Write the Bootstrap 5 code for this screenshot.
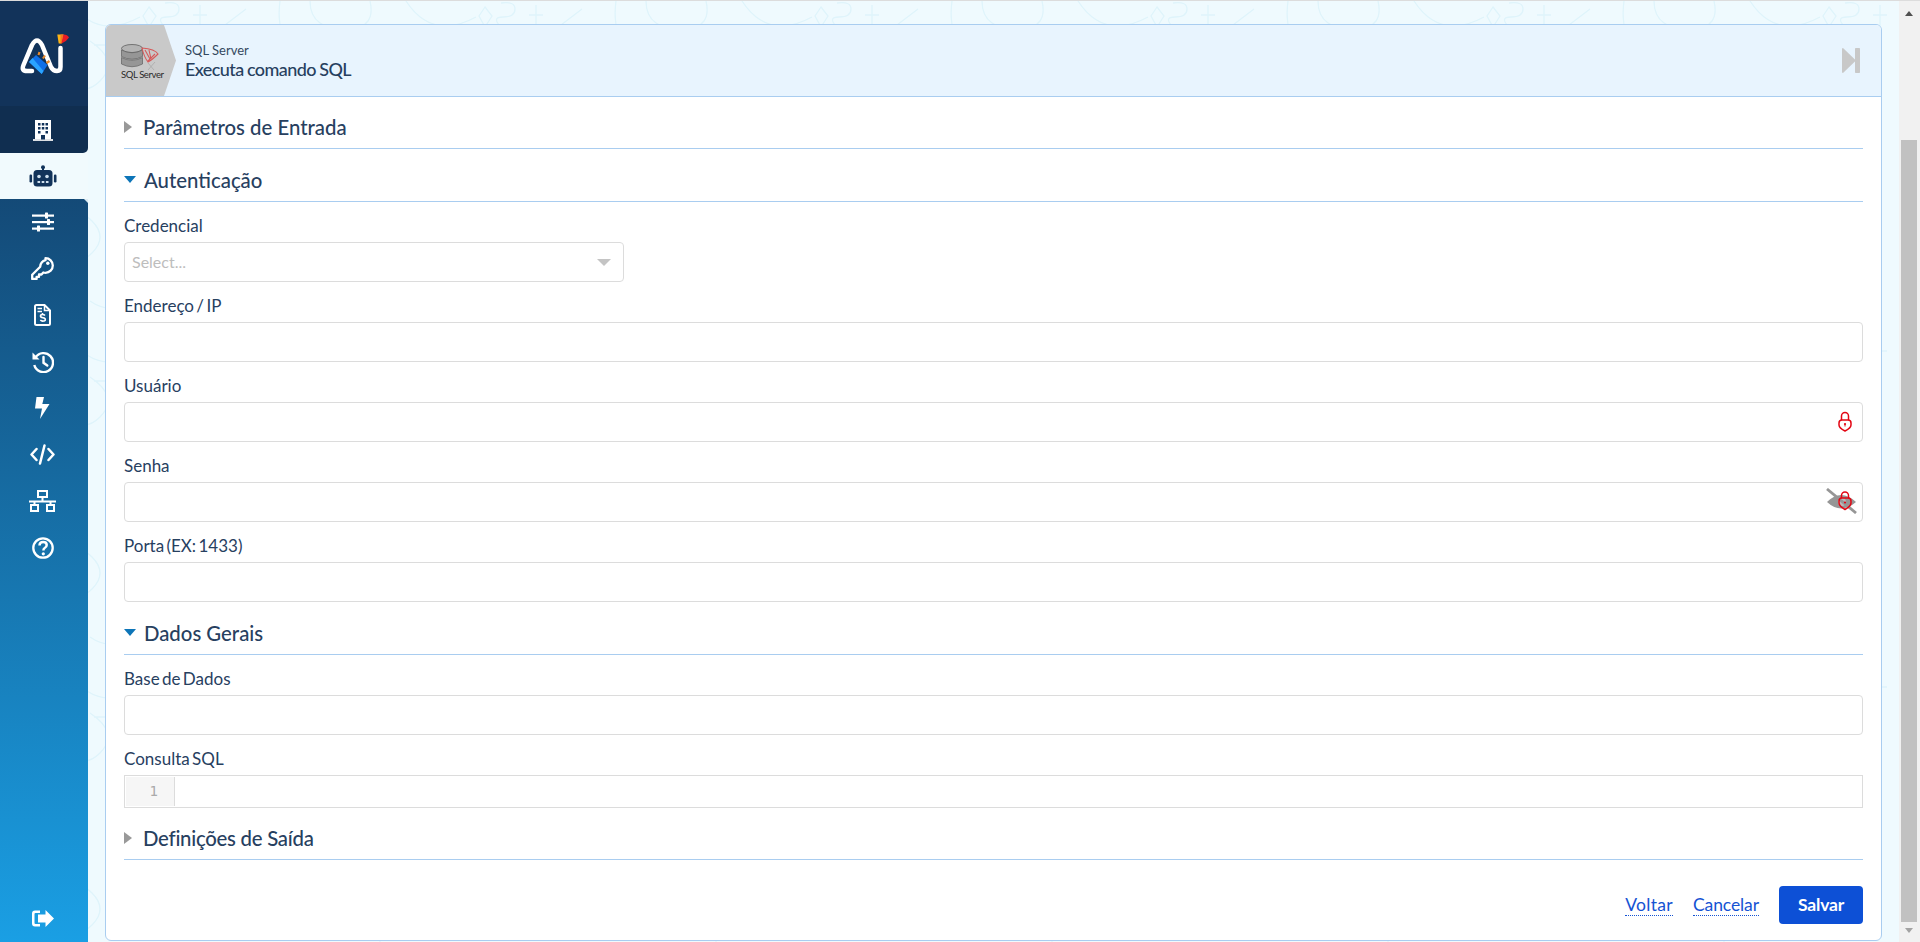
<!DOCTYPE html>
<html lang="pt-BR">
<head>
<meta charset="utf-8">
<title>SQL Server</title>
<link href="https://cdn.jsdelivr.net/npm/bootstrap@5.3.0/dist/css/bootstrap.min.css" rel="stylesheet">
<style>
html,body{height:942px;overflow:hidden;}
body{font-family:Lato,"Liberation Sans",sans-serif;color:#27405f;background:#effafe;}
.app-shell{height:942px;border-top:1px solid #dcdcdc;position:relative;}
.bg-doodle{position:absolute;left:0;top:0;width:1920px;height:942px;pointer-events:none;}
.side-rail{width:88px;flex:0 0 88px;background:linear-gradient(180deg,#12335a 0%,#1a9fe4 100%);position:relative;z-index:1;}
.logo-cell{height:105px;background:#12335a;}
.logo-art{display:block;}
.rail-item{height:46.5px;color:#fff;padding-right:3px;}
.active-wrap{background:#f1fafd;}
.rail-active{height:47px;background:#102e50;border-radius:0 0 5px 0;padding-right:3px;}
.rail-robot{height:46px;background:#f1fafd;color:#12335a;padding-right:3px;position:relative;}
.rail-robot::after{content:"";position:absolute;right:0;top:100%;border-top:4px solid #dcebf3;border-left:4px solid transparent;}
.panel-wrap{flex:1 1 auto;padding:23px 17px 0;min-width:0;position:relative;z-index:1;}
.form-panel{height:917px;border:1px solid #a9cdf0;border-radius:6px;background:#fff;overflow:hidden;}
.panel-top{height:72px;background:#e8f4fe;border-bottom:1px solid #a9cdf0;}
.brand-tag{width:70px;height:71px;background:#c9c9c9;clip-path:polygon(0 0,58px 0,70px 50%,58px 100%,0 100%);padding-left:14px;}
.head-text{margin-left:9px;}
.sub-title{font-size:13px;line-height:16px;color:#34495f;}
.main-title{font-size:18px;line-height:22px;color:#27405f;font-weight:500;letter-spacing:-.6px;word-spacing:-.5px;}
.skip-icon{margin-right:20px;margin-left:auto;}
.panel-body{padding:0 18px;}
.sec-head{height:53px;border-bottom:1px solid #a9cdf0;gap:8px;padding-top:9px;}
.sec-closed{gap:11px;}
.sec-first{height:52px;}
.sec-title{font-size:20.35px;font-weight:500;color:#27405f;line-height:24px;}
.sec-last{height:52px;}
.sec-last .sec-title{letter-spacing:-.25px;}
.tri-right{width:0;height:0;border-left:8px solid #999;border-top:6.5px solid transparent;border-bottom:6.5px solid transparent;}
.tri-down{width:0;height:0;border-top:7px solid #0d75b8;border-left:6.5px solid transparent;border-right:6.5px solid transparent;}
.fld-label{font-size:17px;line-height:20px;padding-top:14px;padding-bottom:6px;margin:0;word-spacing:-2px;color:#27405f;display:block;}
.fld-box{height:40px;border:1px solid #dcdcdc;border-radius:4px;background:#fff;padding:0 7px;}
.fld-box:focus{box-shadow:none;border-color:#dcdcdc;}
.sel-box{width:500px;color:#bdbdbd;font-size:16px;}
.sel-caret{width:0;height:0;border-top:7px solid #c4c4c4;border-left:7px solid transparent;border-right:7px solid transparent;margin-right:5px;}
.fld-icon{position:absolute;}
.lock-one{right:11px;top:9px;}
.eye-one{right:5px;top:6px;}
.code-box{height:33px;border:1px solid #dcdcdc;background:#fff;padding:1px 0 1px 1px;}
.code-gutter{width:49px;background:#f6f6f6;border-right:1px solid #dcdcdc;font-family:"DejaVu Sans Mono","Liberation Mono",monospace;color:#aaa;font-size:14px;line-height:29px;text-align:right;padding-right:16px;}
.action-row{padding-top:26px;gap:20px;}
.dot-link{font-size:17.5px;line-height:20px;color:#1553d3;text-decoration:none;border-bottom:1px dotted #1553d3;letter-spacing:-.1px;}
.back-link{letter-spacing:.3px;}
.save-btn{background:#0d50d6;border:0;border-radius:4px;width:84px;height:38px;font-size:17.5px;font-weight:700;color:#fff;padding:0;letter-spacing:-.2px;}
.save-btn:hover{background:#0d50d6;color:#fff;}
.fake-scroll{width:21px;flex:0 0 21px;background:#f1f1f1;position:relative;z-index:1;}
.scroll-thumb{position:absolute;left:2px;right:3px;top:139px;height:782px;background:#c1c1c1;}
.scroll-up{position:absolute;left:6px;top:10px;width:0;height:0;border-bottom:5px solid #505050;border-left:4.5px solid transparent;border-right:4.5px solid transparent;}
.scroll-down{position:absolute;left:6px;bottom:9px;width:0;height:0;border-top:5px solid #a3a3a3;border-left:4.5px solid transparent;border-right:4.5px solid transparent;}
</style>
</head>
<body>
<div class="app-shell d-flex">
  <svg class="bg-doodle" aria-hidden="true">
    <defs>
      <pattern id="doodles" x="50" y="0" width="336" height="336" patternUnits="userSpaceOnUse">
        <g fill="none" stroke="#dff4fb" stroke-width="1.300">
          <path d="M99 6l7 9-7 11-6-11ZM115 2q14-2 14 6t-12 8-2 10M150 4v22M143 14h14M175 24l21-16"/>
          <path d="M230 0q-4 30 10 42M260 0q0 30 40 28 26-2 20-28M255 30q40-14 50 16"/>
          <path d="M20 0q26 40 70 16M44 44h40M10 70q20 30 40 10t-10-40"/>
          <path d="M14 120h14M21 113v14M70 140l18 22 18-22-18-20ZM260 120l34 22M290 100v30"/>
          <path d="M10 220q16-16 32 0t0 32-32 0 0-32ZM100 230h30v30h-30ZM240 220q30 20 60 0M310 250h20v20"/>
          <path d="M40 300q20 14 40 0M140 296v24M133 308h14M300 300q14 10 0 26"/>
        </g>
      </pattern>
    </defs>
    <rect width="1920" height="942" fill="url(#doodles)"/>
  </svg>
  <nav class="side-rail d-flex flex-column" aria-label="Menu">
    <div class="logo-cell">
      <svg class="logo-art" width="88" height="105" viewBox="0 0 88 105" fill="none">
        <path d="M32 70H27Q21 70 23.500 64L32 44Q37 35 42 44L51 66Q53 70 57 70Q60.500 70 60.500 66V47" stroke="#fff" stroke-width="4.500" stroke-linecap="round" stroke-linejoin="round"/>
        <path d="M29 61 41.700 73 47.500 64 36 54Z" fill="#0f6fe8"/>
        <path d="M29 61 41.700 73 43.500 70 32.500 57Z" fill="#2aa4ff"/>
        <path d="M38.500 54l1-3M43 57.500l2-3M46.500 62l3-2" stroke="#e98a2c" stroke-width="2.200"/>
        <path d="M57.300 33.500H63.300L61 42.500H58.700Z" fill="#fcb316"/>
        <path d="M60.500 33.500H64L62 42.500H60.500Z" fill="#f57a1f"/>
        <path d="M63.500 33.500Q67.500 33.500 69 36.500 66.500 40.500 61.500 42.500Z" fill="#ea1c24"/>
      </svg>
    </div>
    <div class="active-wrap">
      <div class="rail-active d-flex align-items-center justify-content-center">
        <svg width="20" height="22" viewBox="0 0 20 22"><rect x="2" y="1" width="16" height="19.500" fill="#fff"/><rect y="20" width="20" height="2" fill="#dcdfe3"/><g fill="#12335a"><rect x="5" y="4" width="2.500" height="2.500"/><rect x="8.800" y="4" width="2.500" height="2.500"/><rect x="12.500" y="4" width="2.500" height="2.500"/><rect x="5" y="8" width="2.500" height="2.500"/><rect x="8.800" y="8" width="2.500" height="2.500"/><rect x="12.500" y="8" width="2.500" height="2.500"/><rect x="5" y="12" width="2.500" height="2.500"/><rect x="12.500" y="12" width="2.500" height="2.500"/><rect x="8" y="16" width="4" height="4.500"/></g></svg>
      </div>
    </div>
    <div class="rail-robot d-flex align-items-center justify-content-center">
      <svg width="28" height="22" viewBox="0 0 28 22"><circle cx="14" cy="2.200" r="2" fill="#12335a"/><rect x="13" y="3" width="2" height="3" fill="#12335a"/><rect x="4.500" y="5" width="19" height="16.500" rx="3.500" fill="#12335a"/><rect x="0.500" y="9.500" width="2.600" height="8" rx="1.200" fill="#12335a"/><rect x="24.900" y="9.500" width="2.600" height="8" rx="1.200" fill="#12335a"/><g fill="#cfe0ee"><circle cx="10" cy="11.500" r="1.800"/><circle cx="18" cy="11.500" r="1.800"/><rect x="8.500" y="16" width="2.600" height="2"/><rect x="12.700" y="16" width="2.600" height="2"/><rect x="16.900" y="16" width="2.600" height="2"/></g></svg>
    </div>
    <div class="rail-item d-flex align-items-center justify-content-center">
      <svg width="22" height="20" viewBox="0 0 22 20" fill="#fff"><rect y="2.500" width="22" height="2.200"/><rect y="9" width="22" height="2.200"/><rect y="15.500" width="22" height="2.200"/><rect x="13" y="0.500" width="3" height="6" rx=".6"/><rect x="15" y="7" width="3" height="6" rx=".6"/><rect x="5" y="13.500" width="3" height="6" rx=".6"/></svg>
    </div>
    <div class="rail-item d-flex align-items-center justify-content-center">
      <svg width="23" height="23" viewBox="0 0 23 23" fill="none" stroke="#fff" stroke-width="2.300" stroke-linejoin="round"><path d="M14.500 1.200a7.300 7.300 0 0 1 0 14.600c-.8 0-1.500-.1-2.200-.3l-1.800 2H8v2.400H5.600v2H1.200v-4.200l8-8a7.300 7.300 0 0 1 5.300-6.500Z"/><circle cx="16.800" cy="6.200" r="1.700" fill="#fff" stroke="none"/></svg>
    </div>
    <div class="rail-item d-flex align-items-center justify-content-center">
      <svg width="17" height="22" viewBox="0 0 17 22" fill="none" stroke="#fff" stroke-width="2"><path d="M2.500 1h8l5.500 5.500v13q0 1.500-1.500 1.500h-12q-1.500 0-1.500-1.500v-17q0-1.500 1.500-1.500Z"/><path d="M10.500 1v5.500H16M3.500 4.500h4.500M3.500 7.500h4.500" stroke-width="1.500"/><path d="M11 11.500q-.8-1-2.500-1-2 0-2 1.500 0 1.400 2.500 1.800t2.300 1.900q0 1.300-2.300 1.300-1.700 0-2.700-1M8.500 9v1.500M8.500 16.500v1.500" stroke-width="1.600"/></svg>
    </div>
    <div class="rail-item d-flex align-items-center justify-content-center">
      <svg width="22" height="22" viewBox="0 0 22 22" fill="none" stroke="#fff" stroke-width="2.400"><path d="M3.500 6.500A9.500 9.500 0 1 1 2.300 14"/><path d="M0.500 1.500l0 7 7 0Z" fill="#fff" stroke="none"/><path d="M11.500 6v5.800l3.800 2.700" stroke-linecap="round"/></svg>
    </div>
    <div class="rail-item d-flex align-items-center justify-content-center">
      <svg width="15" height="22" viewBox="0 0 15 22" fill="#fff"><path d="M1.500 0h7.500l-1.700 7h7.200L5 22l2-10.500H0Z"/></svg>
    </div>
    <div class="rail-item d-flex align-items-center justify-content-center">
      <svg width="25" height="21" viewBox="0 0 25 21" fill="none" stroke="#fff" stroke-width="2.500" stroke-linecap="round" stroke-linejoin="round"><path d="M6.500 5L1.500 10.500l5 5.500M18.500 5l5 5.500-5 5.500M14.500 1.500L10 19.500"/></svg>
    </div>
    <div class="rail-item d-flex align-items-center justify-content-center">
      <svg width="27" height="22" viewBox="0 0 27 22" fill="none" stroke="#fff" stroke-width="2"><rect x="9" y="1" width="9" height="6"/><rect x="2" y="15" width="7" height="6"/><rect x="18" y="15" width="7" height="6"/><path d="M0 11.500h27M13.500 7v4.500M5.500 11.500V15M21.500 11.500V15"/></svg>
    </div>
    <div class="rail-item d-flex align-items-center justify-content-center">
      <svg width="22" height="22" viewBox="0 0 22 22" fill="none" stroke="#fff" stroke-width="2.300"><circle cx="11" cy="11" r="9.700"/><path d="M7.500 8.500q0-3.500 3.700-3.500 3.500 0 3.500 3 0 2-2 3-1.300.8-1.300 2.500" stroke-width="2.500"/><circle cx="11.300" cy="16.800" r="1.600" fill="#fff" stroke="none"/></svg>
    </div>
    <div class="rail-item d-flex align-items-center justify-content-center mt-auto">
      <svg width="22" height="17" viewBox="0 0 22 17" fill="#fff"><path d="M8 .5H3Q0 .5 0 3.500v10Q0 16.500 3 16.500H8V14H3.500Q2.500 14 2.500 13V4Q2.500 3 3.500 3H8Z"/><path d="M13.500 0 22 8.500 13.500 17V12.500H6V4.500h7.500Z"/></svg>
    </div>
  </nav>
  <main class="panel-wrap">
    <div class="form-panel">
      <header class="panel-top d-flex align-items-center">
        <div class="brand-tag d-flex align-items-center flex-shrink-0">
          <svg width="46" height="46" viewBox="0 0 46 46"><g transform="translate(0 6)"><ellipse cx="12" cy="4.500" rx="10.500" ry="4" fill="#b4b4b4" stroke="#606060" stroke-width=".8"/><path d="M1.500 6v6.500q10.500 5.500 21 0V6q-10.500 5.500-21 0Z" fill="#969696" stroke="#606060" stroke-width=".7"/><path d="M1.500 13.500v6.500q10.500 5.500 21 0v-6.500q-10.500 5.500-21 0Z" fill="#969696" stroke="#606060" stroke-width=".7"/></g><g transform="translate(0 8)"><path d="M22 2q13 1 16 6-6 6-10 8-4-5-6-14ZM25 4l5 9M29 4l2 9M35 8l-7 7" fill="none" stroke="#d65a5a" stroke-width="1.100"/></g><path d="M28 25l6 7M35 24l-7 8" stroke="#aaa" stroke-width=".8"/><text x="1" y="40" font-family="Lato,sans-serif" font-size="9.500" fill="#2a2a2a" textLength="43">SQL Server</text></svg>
        </div>
        <div class="head-text">
          <div class="sub-title">SQL Server</div>
          <div class="main-title">Executa comando SQL</div>
        </div>
        <svg class="skip-icon" width="19" height="25" viewBox="0 0 19 25" fill="#c8c8c8"><path d="M1 0 14 12.500 1 25Q0 25 0 24V1Q0 0 1 0Z"/><rect x="13" width="5" height="25" rx=".8"/></svg>
      </header>
      <div class="panel-body">
        <div class="sec-head sec-closed sec-first d-flex align-items-center"><span class="tri-right"></span><span class="sec-title">Parâmetros de Entrada</span></div>
        <div class="sec-head d-flex align-items-center"><span class="tri-down"></span><span class="sec-title">Autenticação</span></div>
        <label class="fld-label">Credencial</label>
        <div class="fld-box sel-box d-flex align-items-center justify-content-between"><span>Select...</span><span class="sel-caret"></span></div>
        <label class="fld-label">Endereço / IP</label>
        <input class="form-control fld-box" type="text" aria-label="Endereço / IP">
        <label class="fld-label">Usuário</label>
        <div class="position-relative">
          <input class="form-control fld-box" type="text" aria-label="Usuário">
          <svg class="fld-icon lock-one" width="14" height="21" viewBox="0 0 14 21" fill="none" stroke="#e30613" stroke-width="1.500"><path d="M3.500 9V5a3.500 3.500 0 0 1 7 0v4"/><path d="M1 12q0-3 3-3h6q3 0 3 3v2q0 3-6 6-6-3-6-6Z"/><circle cx="7" cy="13" r="1.100" fill="#e30613" stroke="none"/><path d="M7 13v2.500" stroke-width="1"/></svg>
        </div>
        <label class="fld-label">Senha</label>
        <div class="position-relative">
          <input class="form-control fld-box" type="password" aria-label="Senha">
          <svg class="fld-icon eye-one" width="32" height="26" viewBox="0 0 32 26" fill="none"><path d="M1 14Q15 0 30 14 15 27 1 14Z" fill="#969696"/><circle cx="16" cy="14" r="4" fill="#fff" opacity=".35"/><path d="M1 1l29 24" stroke="#969696" stroke-width="2.800"/><path d="M15.500 10V7.500a3.500 3.500 0 0 1 7 0V10" stroke="#e30613" stroke-width="1.500"/><path d="M13 13q0-3 3-3h6q3 0 3 3v2q0 3-6 6.500-6-3.500-6-6.500Z" stroke="#e30613" stroke-width="1.500"/><circle cx="19" cy="14.500" r="1.100" fill="#e30613"/></svg>
        </div>
        <label class="fld-label">Porta (EX: 1433)</label>
        <input class="form-control fld-box" type="text" aria-label="Porta">
        <div class="sec-head d-flex align-items-center"><span class="tri-down"></span><span class="sec-title">Dados Gerais</span></div>
        <label class="fld-label">Base de Dados</label>
        <input class="form-control fld-box" type="text" aria-label="Base de Dados">
        <label class="fld-label">Consulta SQL</label>
        <div class="code-box d-flex"><div class="code-gutter">1</div></div>
        <div class="sec-head sec-closed sec-last d-flex align-items-center"><span class="tri-right"></span><span class="sec-title">Definições de Saída</span></div>
        <div class="action-row d-flex justify-content-end align-items-center">
          <a class="dot-link back-link" href="#">Voltar</a>
          <a class="dot-link" href="#">Cancelar</a>
          <button class="btn save-btn" type="button">Salvar</button>
        </div>
      </div>
    </div>
  </main>
  <div class="fake-scroll" aria-hidden="true"><span class="scroll-up"></span><span class="scroll-thumb"></span><span class="scroll-down"></span></div>
</div>
<script src="https://cdn.jsdelivr.net/npm/bootstrap@5.3.0/dist/js/bootstrap.bundle.min.js"></script>
</body>
</html>
